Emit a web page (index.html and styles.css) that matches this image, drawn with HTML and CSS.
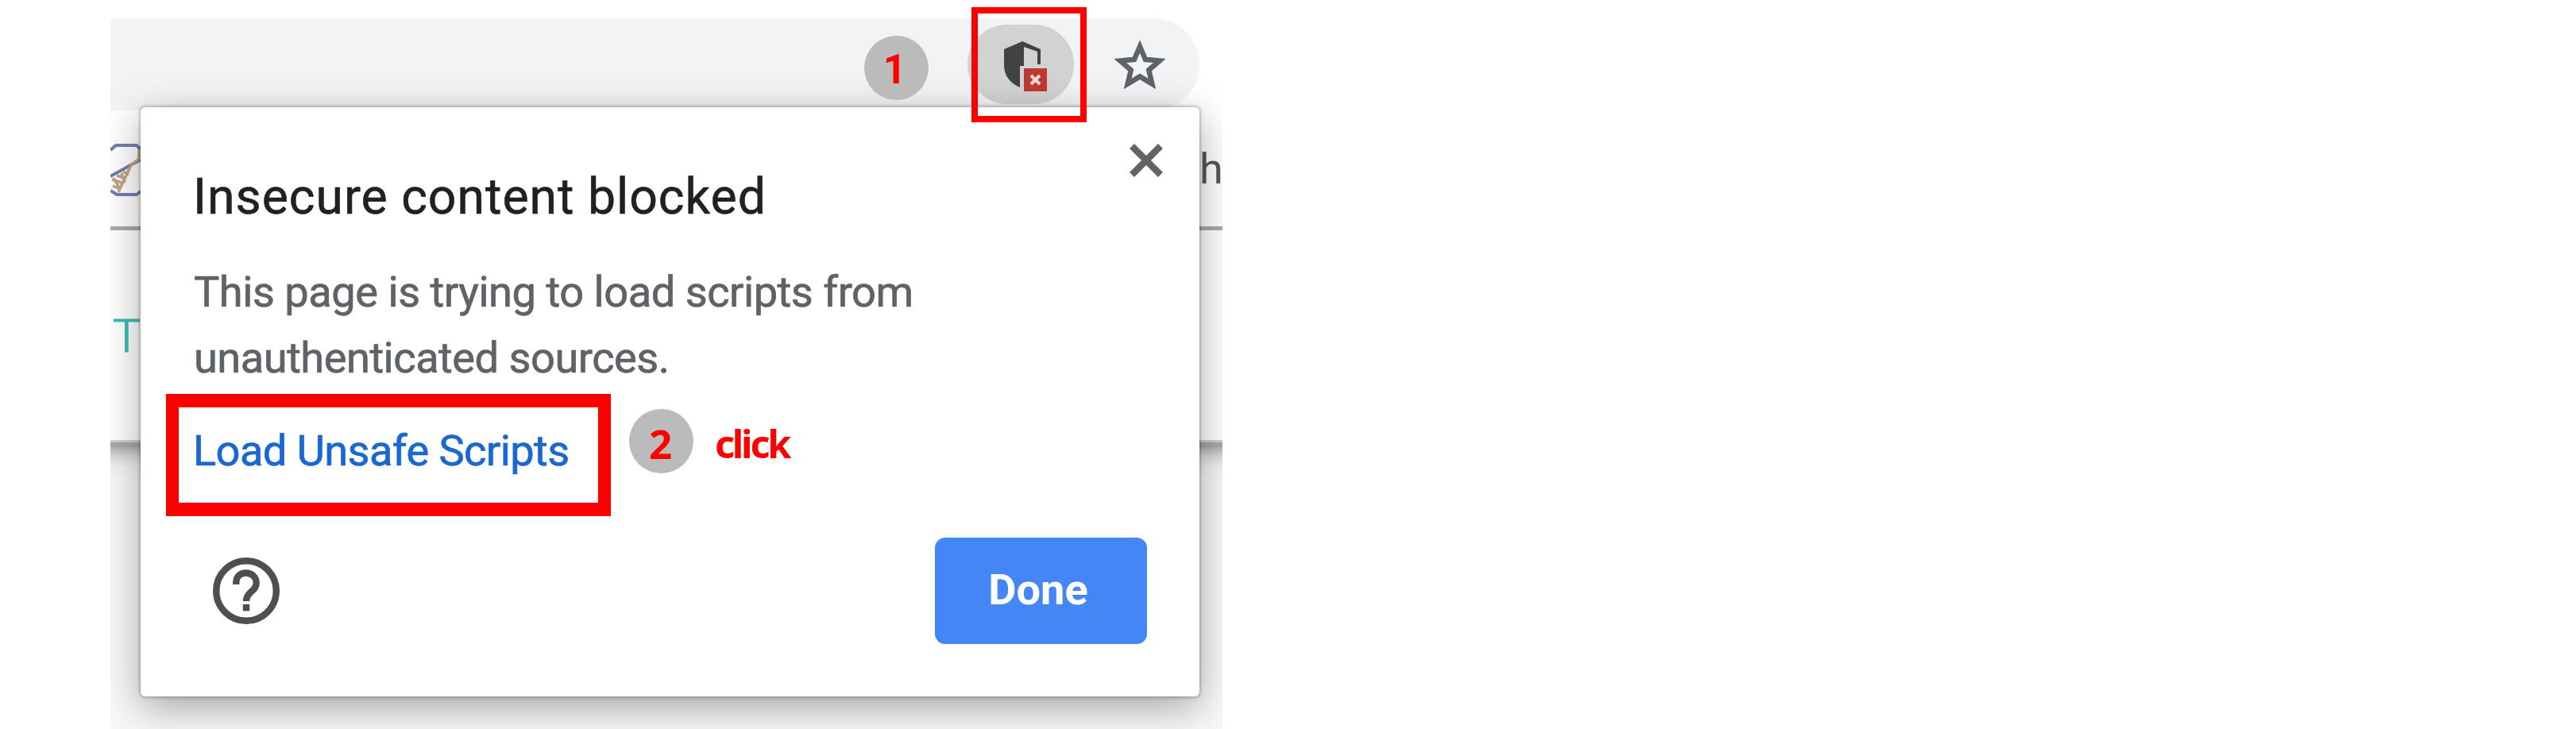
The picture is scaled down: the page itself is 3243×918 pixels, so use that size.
FILE: index.html
```html
<!DOCTYPE html>
<html lang="en">
<head>
<meta charset="utf-8">
<title>Insecure content blocked</title>
<link rel="stylesheet" href="styles.css">
</head>
<body>
<main class="window">
  <div class="omnibox">
    <div class="chip">
      <svg class="shield" viewBox="0 0 56 66">
        <path d="M23 0 L0 10 V30 C0 43 8 53 20 58 V31 H25 V7 L42 13 V29 H46 V10 Z" fill="#424242"/>
        <rect x="25" y="34" width="29" height="29" fill="#c0392f"/>
        <path d="M34 43 L45 54 M45 43 L34 54" stroke="#f0d9d7" stroke-width="4"/>
      </svg>
    </div>
    <svg class="star" viewBox="0 0 24 24"><path fill="#5f6368" stroke="#5f6368" stroke-width=".5" d="M22 9.24l-7.19-.62L12 2 9.19 8.63 2 9.24l5.46 4.73L5.82 21 12 17.27 18.18 21l-1.63-7.03L22 9.24zM12 15.4l-3.76 2.27 1-4.28-3.32-2.88 4.38-.38L12 6.1l1.71 4.04 4.38.38-3.32 2.88 1 4.28L12 15.4z"/></svg>
  </div>
  <div class="bookmarks">
    <svg class="favicon" viewBox="0 0 38 68">
      <path d="M0 9 L7 3 H33 L38 8 M0 42 L38 21 M0 60 L8 65 H33 L38 61" fill="none" stroke="#757db0" stroke-width="4"/>
      <path d="M36 8 V20 L26 28 L10 62 M2 46 L14 50 M8 41 L20 45 M16 36 L23 40 M3 54 L12 58 M4 44 L12 58 M14 38 L18 50" fill="none" stroke="#c0a486" stroke-width="3.5"/>
    </svg>
    <span class="bookmark">h</span>
  </div>
  <div class="page"><span class="page-title">T</span></div>
  <div class="below"></div>

  <section class="popup">
    <header class="head">
      <h1 class="title">Insecure content blocked</h1>
      <svg class="close" viewBox="0 0 42 42"><path d="M3 3 L39 39 M39 3 L3 39" stroke="#616366" stroke-width="8.5"/></svg>
    </header>
    <p class="text"><span class="line1">This page is trying to load scripts from</span><br><span class="line2">unauthenticated sources.</span></p>
    <a class="link">Load Unsafe Scripts</a>
    <footer class="foot">
      <svg class="help" viewBox="0 0 84 84">
        <circle cx="42" cy="42" r="37.8" fill="none" stroke="#4f4f4f" stroke-width="8.4"/>
        <path d="M29.3 34 V31 C29.3 15 54.7 16 54.7 32 C54.7 43 42 43 42 55" fill="none" stroke="#4f4f4f" stroke-width="8.4"/>
        <rect x="37.8" y="59" width="8.4" height="8.4" fill="#4f4f4f"/>
      </svg>
      <button class="done">Done</button>
    </footer>
  </section>

  <div class="mark mark-icon"></div>
  <div class="mark mark-link"></div>
  <div class="step step-one">1</div>
  <div class="step step-two">2</div>
  <div class="hint">click</div>
</main>
</body>
</html>
```
FILE: styles.css
```css
body { margin: 0; background: #fff; font-family: Roboto, "Liberation Sans", sans-serif; }
.window {
  position: relative; box-sizing: border-box; width: 1400px; height: 918px; margin-left: 139px;
  padding-top: 23px; overflow: hidden; display: flex; flex-direction: column; background: #fff;
}
.omnibox {
  box-sizing: border-box; width: 1371px; height: 116px; flex: none; padding: 8px 38px 0 0;
  display: flex; justify-content: flex-end; align-items: flex-start; gap: 46px;
  background: #f1f3f4; border-radius: 0 58px 58px 0;
}
.chip { box-sizing: border-box; width: 134px; height: 100px; padding: 21px 0 0 46px; border-radius: 50px; background: #d1d3d2; }
.shield { display: block; width: 56px; height: 66px; }
.star { width: 74px; height: 74px; margin-top: 15px; }
.bookmarks {
  box-sizing: border-box; height: 151px; flex: none; padding-top: 41px; border-bottom: 5px solid #a9a9a9;
  display: flex; justify-content: space-between;
}
.favicon { width: 38px; height: 68px; }
.bookmark { font-size: 54px; line-height: 64px; color: #55565c; margin: 1px 0 0; width: 29px; }
.page { box-sizing: border-box; height: 264px; flex: none; padding-top: 103px; }
.page-title { display: block; margin-left: 3px; font: 300 58px/60px Roboto, sans-serif; color: #3dbdb3; -webkit-text-stroke: 1.2px #3dbdb3; }
.below { flex: 1; background: linear-gradient(#d0d0d0 0 3px, #a8a8a8 3px 8px, #bdbdbd 12px, #dedede 22px, #f2f2f2 34px, #f8f8f8 50px); }

.popup {
  position: absolute; left: 38px; top: 135px; box-sizing: border-box; width: 1333px; height: 742px;
  padding: 46px 46px 66px 67px; display: flex; flex-direction: column;
  background: #fff; border-radius: 6px;
  box-shadow: 0 0 3px 2px rgba(0, 0, 0, .2), 0 14px 50px rgba(0, 0, 0, .34);
}
.head { display: flex; justify-content: space-between; height: 154px; }
.title { margin: 30px 0 0 -1px; font-size: 62.5px; line-height: 73px; font-weight: 400; letter-spacing: .98px; color: #202124; white-space: nowrap; -webkit-text-stroke: .6px #202124; }
.close { width: 42px; height: 42px; }
.text { margin: -9px 0 0; font-size: 54.2px; line-height: 83.3px; color: #5f6368; white-space: nowrap; -webkit-text-stroke: .7px #5f6368; }
.line1 { letter-spacing: -.48px; }
.line2 { letter-spacing: -.5px; }
.link { margin: 33px 0 0 -1px; font-size: 54.2px; line-height: 83px; letter-spacing: -.58px; color: #1967d2; -webkit-text-stroke: .7px #1967d2; }
.foot { flex: 1; display: flex; justify-content: space-between; align-items: flex-end; }
.help { width: 84px; height: 84px; margin: 0 0 25px 24px; }
.done {
  width: 267px; height: 134px; border: 0; padding: 0 7px 2px 0; margin-right: 20px; border-radius: 13px;
  background: #4486f6; color: #fff; font: 700 54.2px/132px Roboto, sans-serif;
}

.mark { position: absolute; box-sizing: border-box; border: 8.5px solid #f00; }
.mark-icon { left: 1084px; top: 9px; width: 145px; height: 145px; }
.mark-link { left: 70px; top: 496px; width: 560px; height: 154px; border-width: 17px 16px; }
.step {
  position: absolute; width: 81px; height: 81px; border-radius: 50%; background: #bbb;
  color: #f00; text-align: center; font-weight: 700;
}
.step-one { left: 949px; top: 45px; font-family: Roboto, sans-serif; font-size: 51px; line-height: 85px; text-indent: -4px; }
.step-two { left: 653px; top: 515px; font-family: "Noto Sans", sans-serif; font-size: 51px; line-height: 86px; text-indent: -2px; }
.hint { position: absolute; left: 761px; top: 524px; font: 700 48.5px/68px "Noto Sans", sans-serif; letter-spacing: -3.2px; color: #f00; }
```
